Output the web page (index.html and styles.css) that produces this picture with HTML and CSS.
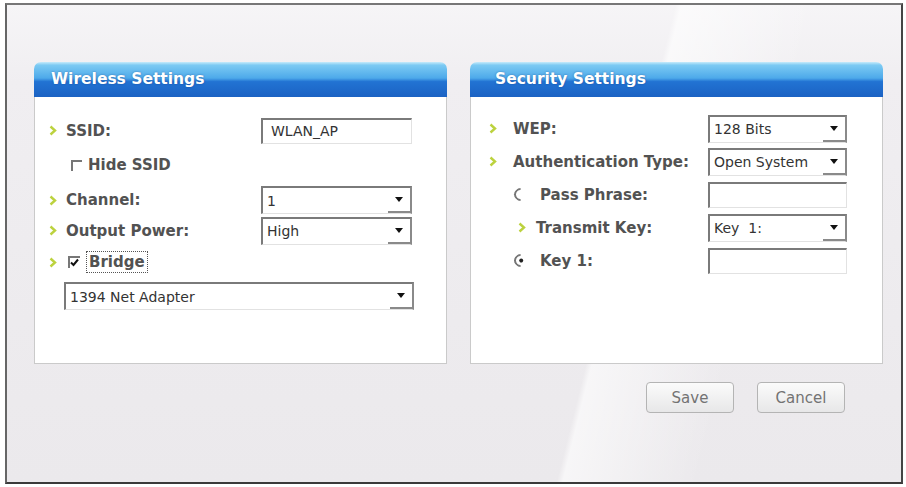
FILE: index.html
```html
<!DOCTYPE html>
<html lang="en">
<head>
  <meta charset="UTF-8">
  <title>Wireless LAN Setup</title>
  <link rel="stylesheet" href="styles.css">
</head>
<body>

  <div class="frame">
    <div class="panels">

      <!-- Wireless settings -->
      <section class="panel">
        <h2 class="panel-title wireless-title">Wireless Settings</h2>
        <div class="panel-body wireless">
          <div class="row r-ssid">
            <span class="bullet"><svg viewBox="0 0 8 11"><path d="M1.5 1.5 6 5.5 1.5 9.5"/></svg></span>
            <span class="label">SSID:</span>
            <div class="field">WLAN_AP</div>
          </div>
          <div class="row r-hide">
            <span class="check"></span>
            <span class="label">Hide SSID</span>
          </div>
          <div class="row r-channel">
            <span class="bullet"><svg viewBox="0 0 8 11"><path d="M1.5 1.5 6 5.5 1.5 9.5"/></svg></span>
            <span class="label">Channel:</span>
            <div class="field select"><span class="value">1</span><span class="drop"></span></div>
          </div>
          <div class="row r-power">
            <span class="bullet"><svg viewBox="0 0 8 11"><path d="M1.5 1.5 6 5.5 1.5 9.5"/></svg></span>
            <span class="label">Output Power:</span>
            <div class="field select"><span class="value">High</span><span class="drop"></span></div>
          </div>
          <div class="row r-bridge">
            <span class="bullet"><svg viewBox="0 0 8 11"><path d="M1.5 1.5 6 5.5 1.5 9.5"/></svg></span>
            <span class="check checked"><svg viewBox="0 0 9 9"><path d="M1 4.5 3.5 7 8 1.5"/></svg></span>
            <span class="label focus">Bridge</span>
          </div>
          <div class="row r-adapter">
            <div class="field select wide"><span class="value">1394 Net Adapter</span><span class="drop"></span></div>
          </div>
        </div>
      </section>

      <!-- Security settings -->
      <section class="panel">
        <h2 class="panel-title security-title">Security Settings</h2>
        <div class="panel-body security">
          <div class="row">
            <span class="bullet"><svg viewBox="0 0 8 11"><path d="M1.5 1.5 6 5.5 1.5 9.5"/></svg></span>
            <span class="label">WEP:</span>
            <div class="field select"><span class="value">128 Bits</span><span class="drop"></span></div>
          </div>
          <div class="row">
            <span class="bullet"><svg viewBox="0 0 8 11"><path d="M1.5 1.5 6 5.5 1.5 9.5"/></svg></span>
            <span class="label">Authentication Type:</span>
            <div class="field select"><span class="value">Open System</span><span class="drop"></span></div>
          </div>
          <div class="row r-radio">
            <span class="radio"></span>
            <span class="label">Pass Phrase:</span>
            <div class="field"></div>
          </div>
          <div class="row r-transmit">
            <span class="bullet"><svg viewBox="0 0 8 11"><path d="M1.5 1.5 6 5.5 1.5 9.5"/></svg></span>
            <span class="label">Transmit Key:</span>
            <div class="field select"><span class="value">Key&nbsp; 1:</span><span class="drop"></span></div>
          </div>
          <div class="row r-radio">
            <span class="radio on"></span>
            <span class="label">Key 1:</span>
            <div class="field"></div>
          </div>
        </div>
      </section>

    </div>

    <div class="actions">
      <button class="btn">Save</button>
      <button class="btn">Cancel</button>
    </div>
  </div>

</body>
</html>
```

FILE: styles.css
```css
/* Page and outer frame */
body {
  margin: 0;
  padding: 3px 3px 3px 5px;
  background-color: #ffffff;
  font-family: "DejaVu Sans", Verdana, sans-serif;
}

.frame {
  width: 898px;
  height: 481px;
  box-sizing: border-box;
  padding: 57px 18px 0 27px;
  border: 2px solid #5a5a5a;
  border-color: #777 #444 #3a3a3a #666;
  background:
    linear-gradient(104deg, rgba(255, 255, 255, 0) 66%, rgba(255, 255, 255, 0.6) 66.6%, rgba(255, 255, 255, 0) 80%),
    linear-gradient(to bottom, #f6f5f7 0, #f0eef1 16%, #ebe9ec 100%);
}

.panels {
  display: flex;
  gap: 23px;
}

/* Settings panels */
.panel {
  width: 413px;
}

.panel-title {
  margin: 0;
  height: 35px;
  line-height: 35px;
  border-radius: 7px 7px 0 0;
  background: linear-gradient(to bottom, #c6ebfb 0, #7ccaf3 9%, #4da9ea 46%, #2273d3 56%, #1b62c3 100%);
  color: #fff;
  font-size: 15.5px;
  font-weight: bold;
  text-shadow: 0 0 2px rgba(0, 40, 110, 0.5);
}

.wireless-title {
  padding-left: 17px;
}

.security-title {
  padding-left: 25px;
}

.panel-body {
  height: 267px;
  box-sizing: border-box;
  background-color: #fff;
  border: 1px solid #cacaca;
  border-top: none;
}

.wireless {
  padding: 19px 34px 0 14px;
}

.security {
  padding: 15px 35px 0 18px;
}

/* Form rows */
.row {
  display: flex;
  align-items: center;
  height: 33px;
}

.label {
  flex: 1;
  font-size: 15px;
  font-weight: bold;
  color: #525252;
  white-space: nowrap;
}

.bullet {
  width: 17px;
  flex: none;
  display: flex;
  align-items: center;
}

.security .bullet {
  width: 24px;
}

.bullet svg {
  width: 8px;
  height: 11px;
}

.bullet path {
  fill: none;
  stroke: #bcd23e;
  stroke-width: 2.4;
}

.r-ssid { height: 29px; }
.r-hide { height: 40px; padding-left: 22px; }
.r-channel { height: 30px; }
.r-power { height: 31px; }
.r-bridge { height: 32px; }
.r-adapter { height: 36px; padding-left: 15px; }

.r-radio { padding-left: 25px; }
.security .r-transmit .bullet { width: 18px; margin-left: 29px; }

/* Inputs and dropdowns */
.field {
  width: 151px;
  height: 26px;
  box-sizing: border-box;
  flex: none;
  display: flex;
  align-items: center;
  padding-left: 8px;
  background-color: #fff;
  border-top: 2px solid #7a7a7a;
  border-left: 2px solid #7a7a7a;
  border-right: 1px solid #e2e2e2;
  border-bottom: 1px solid #e2e2e2;
  font-size: 14px;
  color: #333;
}

.security .field {
  width: 139px;
}

.field.select {
  height: 28px;
  padding-left: 4px;
  border-right: 2px solid #8a8a8a;
}

.field.wide {
  width: 350px;
}

.value {
  flex: 1;
  white-space: nowrap;
}

.drop {
  width: 22px;
  height: 100%;
  box-sizing: border-box;
  display: flex;
  align-items: center;
  justify-content: center;
  border-bottom: 2px solid #8a8a8a;
}

.drop::after {
  content: "";
  border-left: 4.5px solid transparent;
  border-right: 4.5px solid transparent;
  border-top: 5px solid #111;
}

/* Checkboxes and radios */
.check {
  width: 10px;
  height: 10px;
  flex: none;
  margin-right: 8px;
  border-top: 2px solid #777;
  border-left: 2px solid #777;
  background-color: #fff;
}

.r-hide .check {
  width: 9px;
  height: 9px;
  margin-right: 6px;
}

.r-bridge .check {
  margin-left: 2px;
  margin-right: 6px;
}

.check svg {
  display: block;
  width: 9px;
  height: 9px;
}

.check path {
  fill: none;
  stroke: #111;
  stroke-width: 2;
}

.focus {
  flex: none;
  padding: 1px 2px;
  border: 1px dotted #555;
}

.radio {
  position: relative;
  width: 9px;
  height: 9px;
  flex: none;
  margin-right: 13px;
  border-radius: 50%;
  border: 2px solid transparent;
  border-top-color: #777;
  border-left-color: #777;
  transform: rotate(-45deg);
}

.radio.on::after {
  content: "";
  position: absolute;
  left: 2.5px;
  top: 2.5px;
  width: 4px;
  height: 4px;
  border-radius: 50%;
  background-color: #222;
}

/* Save / Cancel */
.actions {
  display: flex;
  justify-content: flex-end;
  gap: 23px;
  margin-top: 18px;
  padding-right: 38px;
}

.btn {
  width: 88px;
  height: 31px;
  border: 1px solid #b4b4b4;
  border-radius: 4px;
  background: linear-gradient(to bottom, #fbfbfb, #e7e7e8);
  color: #737373;
  font-family: "DejaVu Sans", Verdana, sans-serif;
  font-size: 15px;
}
```
